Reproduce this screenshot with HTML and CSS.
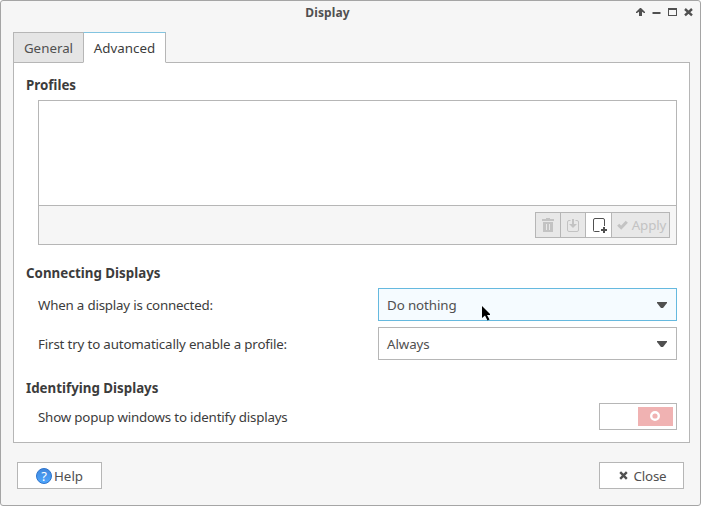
FILE: index.html
```html
<!DOCTYPE html>
<html lang="en">
<head>
    <meta charset="UTF-8">
    <meta name="viewport" content="width=device-width, initial-scale=1.0">
    <title>Display</title>
    <link rel="stylesheet" href="styles.css">
</head>
<body>
    <div class="window">
        <header class="titlebar">
            <h1>Display</h1>
            <div class="window-buttons">
                <svg width="9" height="9" viewBox="0 0 9 9"><path d="M4 0 H5 L9 4 V5 H8 L6 3.8 V8 H3 V3.8 L1 5 H0 V4 Z"/></svg>
                <svg width="9" height="9" viewBox="0 0 9 9"><path d="M.5 4 H8.5 V6 H.5 Z"/></svg>
                <svg width="9" height="9" viewBox="0 0 9 9"><path fill-rule="evenodd" d="M0 0 H9 V8 H0 Z M1 2 V7 H8 V2 Z"/></svg>
                <svg width="9" height="9" viewBox="0 0 9 9"><path class="cross" d="M1 1 L8 7.4 M8 1 L1 7.4"/></svg>
            </div>
        </header>

        <nav class="tabs">
            <div class="tab">General</div>
            <div class="tab active">Advanced</div>
        </nav>

        <main class="panel">
            <h2>Profiles</h2>
            <div class="profiles">
                <div class="profiles-list"></div>
                <div class="toolbar">
                    <div class="tool-group">
                        <button class="tool" disabled aria-label="Delete">
                            <svg width="12" height="14" viewBox="0 0 12 14"><path fill-rule="evenodd" d="M4 0 H8 V1 H12 V3 H0 V1 H4 Z M1 4 H11 V14 H1 Z M4 6 V12 H5 V6 Z M7 6 V12 H8 V6 Z"/></svg>
                        </button>
                        <button class="tool" disabled aria-label="Save">
                            <svg width="12" height="13" viewBox="0 0 12 13"><path class="line" d="M3.5 1.5 H2 Q.5 1.5 .5 3 V11 Q.5 12.5 2 12.5 H10 Q11.5 12.5 11.5 11 V3 Q11.5 1.5 10 1.5 H8.5"/><path d="M5 0 H7 V5 H10 L6 9 L2 5 H5 Z"/></svg>
                        </button>
                        <button class="tool tool-new" aria-label="New">
                            <svg width="15" height="15" viewBox="0 0 15 15"><path class="line" d="M7.5 13.5 H2.5 Q1.5 13.5 1.5 12.5 V2 Q1.5 .5 3 .5 H11 Q12.5 .5 12.5 2 V8"/><path d="M11 9 H13 V11 H15 V13 H13 V15 H11 V13 H9 V11 H11 Z"/></svg>
                        </button>
                        <button class="tool tool-apply" disabled>
                            <svg width="11" height="10" viewBox="0 0 11 10"><path class="check" d="M1.2 4.7 L4.2 7.7 L9.8 1.7"/></svg>
                            <span>Apply</span>
                        </button>
                    </div>
                </div>
            </div>

            <h2 class="connecting">Connecting Displays</h2>
            <div class="row">
                <span class="label">When a display is connected:</span>
                <div class="combo focused">
                    <span>Do nothing</span>
                    <svg width="10" height="6" viewBox="0 0 10 6"><path d="M0 0 H10 V1 L6 6 H4 L0 1 Z"/></svg>
                </div>
            </div>
            <div class="row">
                <span class="label label-long">First try to automatically enable a profile:</span>
                <div class="combo">
                    <span>Always</span>
                    <svg width="10" height="6" viewBox="0 0 10 6"><path d="M0 0 H10 V1 L6 6 H4 L0 1 Z"/></svg>
                </div>
            </div>

            <h2 class="identifying">Identifying Displays</h2>
            <div class="row row-switch">
                <span class="label">Show popup windows to identify displays</span>
                <div class="switch">
                    <div class="slider">
                        <svg width="10" height="10" viewBox="0 0 10 10"><circle class="ring" cx="5" cy="5" r="3.8"/></svg>
                    </div>
                </div>
            </div>
        </main>

        <footer class="actions">
            <button class="btn btn-help">
                <svg width="16" height="16" viewBox="0 0 16 16">
                    <defs>
                        <linearGradient id="ball" x1="0" y1="0" x2="0" y2="1">
                            <stop offset="0" stop-color="#3f86dc"/>
                            <stop offset="1" stop-color="#4fa8ff"/>
                        </linearGradient>
                    </defs>
                    <circle cx="8" cy="8" r="7.5" fill="url(#ball)" stroke="#2f74cc"/>
                    <text x="8" y="12.8" class="mark">?</text>
                </svg>
                <span>Help</span>
            </button>
            <button class="btn btn-close">
                <svg width="9" height="9" viewBox="0 0 9 9"><path class="cross" d="M1.2 1.2 L7.8 7.8 M7.8 1.2 L1.2 7.8"/></svg>
                <span>Close</span>
            </button>
        </footer>

        <svg class="pointer" width="9" height="16" viewBox="0 0 9 16"><path d="M0 0 L8 8 V9 H5 L7.5 13.5 L5.5 14.5 L3 9.5 L0 12 Z"/></svg>
    </div>
</body>
</html>
```
FILE: styles.css
```css
* {
    box-sizing: border-box;
}

body {
    margin: 0;
    background-color: #fff;
    color: #3c3c3c;
    font-family: "Noto Sans", sans-serif;
    font-size: 13.33px;
    line-height: 18px;
}

svg {
    display: block;
    fill: currentColor;
    flex: none;
}

button {
    margin: 0;
    padding: 0;
    border: none;
    font: inherit;
    color: inherit;
}

.window {
    position: relative;
    width: 701px;
    height: 506px;
    border: 1px solid #a5a5a5;
    border-radius: 3px;
    background-color: #f6f6f6;
    padding: 0 10px 0 12px;
}

/* Title bar */
.titlebar {
    display: flex;
    align-items: center;
    height: 31px;
    padding-bottom: 8px;
    color: #505050;
}

.titlebar h1 {
    flex: 1;
    margin: 0;
    padding-left: 6px;
    font-size: 12px;
    line-height: 16px;
    letter-spacing: 0.1px;
    text-align: center;
}

.window-buttons {
    display: flex;
    gap: 7px;
    padding-right: 7px;
    margin-right: -10px;
}

.cross {
    fill: none;
    stroke: currentColor;
    stroke-width: 2.4;
}

/* Tabs */
.tabs {
    display: flex;
    height: 31px;
    margin-bottom: -1px;
    position: relative;
}

.tab {
    width: 70px;
    height: 31px;
    padding-top: 6px;
    border: 1px solid #b6b6b6;
    border-right: none;
    background-color: #e5e5e5;
    color: #505050;
    text-align: center;
}

.tab.active {
    width: 83px;
    border-right: 1px solid #b6b6b6;
    border-top-color: #82c4e0;
    border-bottom-color: #fff;
    background-color: #fff;
    color: #3c3c3c;
}

.panel {
    height: 381px;
    padding: 13px 12px 0;
    border: 1px solid #b6b6b6;
    background-color: #fff;
}

h2 {
    margin: 0;
    font-size: 13.33px;
    font-weight: bold;
    line-height: 18px;
}

/* Profiles list and its toolbar */
.profiles {
    height: 145px;
    margin: 6px 0 0 12px;
    border: 1px solid #b6b6b6;
}

.profiles-list {
    height: 105px;
    border-bottom: 1px solid #b6b6b6;
}

.toolbar {
    display: flex;
    justify-content: flex-end;
    height: 38px;
    padding: 6px 6px 0 0;
    background-color: #f6f6f6;
}

.tool-group {
    display: flex;
    height: 26px;
    border: 1px solid #b6b6b6;
}

.tool {
    display: flex;
    align-items: center;
    justify-content: center;
    width: 25px;
    border-right: 1px solid #b6b6b6;
    background-color: #e8e8e8;
    color: #c3c3c3;
}

.tool-new {
    width: 26px;
    padding-left: 2px;
    background-color: #fff;
    color: #505050;
}

.tool-apply {
    width: 57px;
    gap: 4px;
    padding-left: 2px;
    border-right: none;
    letter-spacing: -0.1px;
}

.line {
    fill: none;
    stroke: currentColor;
}

.check {
    fill: none;
    stroke: currentColor;
    stroke-width: 3;
}

/* Settings rows */
.connecting {
    margin-top: 19px;
}

.identifying {
    margin-top: 19px;
}

.row {
    display: flex;
    align-items: center;
    justify-content: space-between;
    margin: 6px 0 0 12px;
}

.label {
    letter-spacing: -0.2px;
}

.label-long {
    letter-spacing: -0.16px;
}

.combo {
    display: flex;
    align-items: center;
    justify-content: space-between;
    width: 299px;
    height: 33px;
    padding: 0 9px 0 8px;
    border: 1px solid #b6b6b6;
    background-color: #fff;
    color: #505050;
    letter-spacing: -0.1px;
}

.combo svg {
    margin-top: 1px;
}

.combo.focused {
    border-color: #65b9df;
    background-color: #f5fbff;
}

.switch {
    width: 78px;
    height: 27px;
    padding: 3px;
    border: 1px solid #b6b6b6;
}

.slider {
    display: flex;
    align-items: center;
    justify-content: center;
    width: 35px;
    height: 19px;
    margin-left: auto;
    padding: 0 1px 1px 0;
    background-color: #f0b2b2;
}

.ring {
    fill: none;
    stroke: #fff;
    stroke-width: 2.4;
}

/* Bottom buttons */
.actions {
    display: flex;
    justify-content: space-between;
    padding: 19px 6px 0 4px;
}

.btn {
    display: flex;
    align-items: center;
    justify-content: center;
    width: 85px;
    height: 27px;
    border: 1px solid #b6b6b6;
    background-color: #fff;
    color: #505050;
}

.btn-help {
    gap: 2px;
}

.btn-close {
    gap: 6px;
    padding-left: 2px;
    letter-spacing: -0.2px;
}

.mark {
    fill: #fff;
    font-size: 13px;
    text-anchor: middle;
}

.pointer {
    position: absolute;
    left: 481px;
    top: 305px;
    color: #000;
}
```
